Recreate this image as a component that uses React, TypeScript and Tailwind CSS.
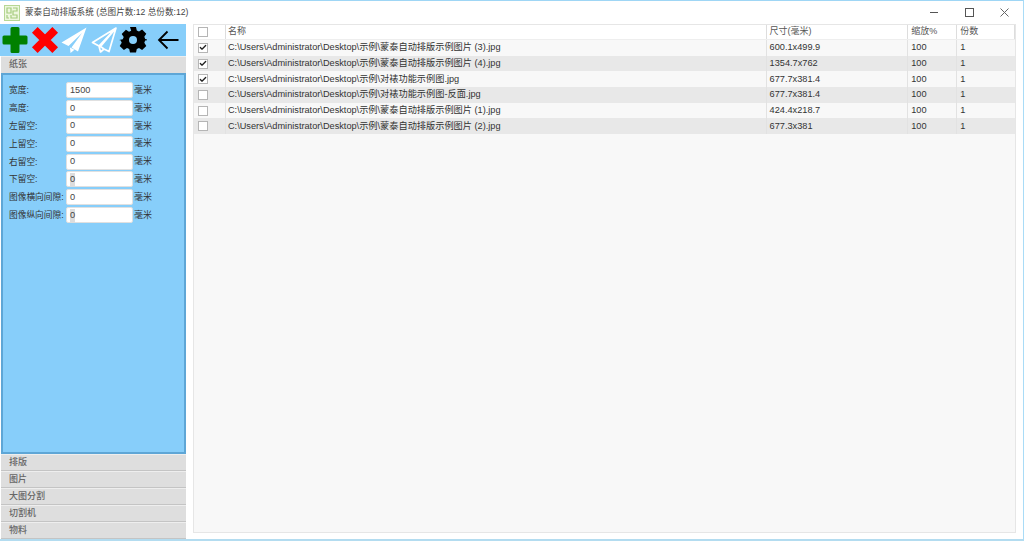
import { Check } from "lucide-react";

const font = { fontFamily: '"Liberation Sans", "Noto Sans CJK SC", sans-serif' };

const fields = [
  { label: "宽度:", value: "1500" },
  { label: "高度:", value: "0" },
  { label: "左留空:", value: "0" },
  { label: "上留空:", value: "0" },
  { label: "右留空:", value: "0" },
  { label: "下留空:", value: "0", selected: true },
  { label: "图像横向间隙:", value: "0" },
  { label: "图像纵向间隙:", value: "0", selected: true },
];

const rows = [
  { name: "C:\\Users\\Administrator\\Desktop\\示例\\蒙泰自动排版示例图片 (3).jpg", size: "600.1x499.9", checked: true },
  { name: "C:\\Users\\Administrator\\Desktop\\示例\\蒙泰自动排版示例图片 (4).jpg", size: "1354.7x762", checked: true },
  { name: "C:\\Users\\Administrator\\Desktop\\示例\\对裱功能示例图.jpg", size: "677.7x381.4", checked: true },
  { name: "C:\\Users\\Administrator\\Desktop\\示例\\对裱功能示例图-反面.jpg", size: "677.7x381.4", checked: false },
  { name: "C:\\Users\\Administrator\\Desktop\\示例\\蒙泰自动排版示例图片 (1).jpg", size: "424.4x218.7", checked: false },
  { name: "C:\\Users\\Administrator\\Desktop\\示例\\蒙泰自动排版示例图片 (2).jpg", size: "677.3x381", checked: false },
];

const sections = ["排版", "图片", "大图分割", "切割机", "物料"];

function Box({ checked }: { checked: boolean }) {
  return (
    <div className="w-[10px] h-[10px] bg-white border border-[#b5b5b5] flex items-center justify-center">
      {checked && <Check size={9} strokeWidth={4} color="#222" />}
    </div>
  );
}

function SectionHead({ label }: { label: string }) {
  return (
    <div className="h-[17px] ml-[1px] bg-[#dedede] border-b border-[#c4c4c4] border-t border-t-[#eeeeee] pl-[8px] flex items-center text-[9px] font-medium text-[#666]">
      {label}
    </div>
  );
}

function Toolbar() {
  return (
    <div className="h-[32px] pl-[1px] flex items-center gap-[1.500px] bg-[#87cefa]">
      {/* add */}
      <svg width="28" height="28" viewBox="0 0 28 28" className="shrink-0">
        <path d="M11 1h6a1.500 1.500 0 0 1 1.500 1.500V9.500h6.500a1.500 1.500 0 0 1 1.500 1.500v6a1.500 1.500 0 0 1-1.500 1.500h-6.500V25.500A1.500 1.500 0 0 1 17 27h-6a1.500 1.500 0 0 1-1.500-1.500V18.500H3A1.500 1.500 0 0 1 1.500 17v-6A1.500 1.500 0 0 1 3 9.500h6.500V2.500A1.500 1.500 0 0 1 11 1z" fill="#008000" />
      </svg>
      {/* delete */}
      <svg width="28" height="28" viewBox="0 0 28 28" className="shrink-0">
        <path d="M3.800 3.800 L24.200 24.200 M24.200 3.800 L3.800 24.200" stroke="#ff0000" strokeWidth="8" strokeLinecap="butt" />
      </svg>
      {/* send, filled */}
      <svg width="28" height="28" viewBox="0 0 28 28" className="shrink-0">
        <path d="M26.500 1.500 L1.500 16.500 L8.500 20 L22 7 L11.500 21.500 L18 25.500 Z M10 21.500 L10.500 27 L14.500 23.800 Z" fill="#ffffff" />
      </svg>
      {/* send, outline */}
      <svg width="28" height="28" viewBox="0 0 28 28" className="shrink-0">
        <path d="M26 2 L2.500 16.500 L9 20 L10.500 26 L14 23 L19 25.500 Z M9 20 L26 2 M14 23 L10.500 20.500 L26 2" fill="none" stroke="#ffffff" strokeWidth="1.700" strokeLinejoin="round" />
      </svg>
      {/* settings */}
      <svg width="28" height="28" viewBox="0 0 28 28" className="shrink-0">
        <path
          d="M11 1h6l.8 3.600 2.200.9 3.100-2 4.200 4.200-2 3.100.9 2.200 3.600.8-3.600.8-.9 2.200 2 3.100-4.200 4.200-3.100-2-2.200.9-.8 3.600h-6l-.8-3.600-2.200-.9-3.100 2-4.200-4.200 2-3.100-.9-2.200L.2 14l3.600-.8.9-2.200-2-3.100 4.200-4.200 3.100 2 2.200-.9z"
          fill="#000"
        />
        <circle cx="14" cy="14" r="4" fill="#87cefa" />
      </svg>
      {/* back */}
      <svg width="28" height="28" viewBox="0 0 28 28" className="shrink-0 ml-[5.500px]">
        <path d="M24.500 14H5 M13.500 5.500 L5 14 L13.500 22.500" fill="none" stroke="#000" strokeWidth="1.800" />
      </svg>
    </div>
  );
}

export default function App() {
  return (
    <div className="w-[1024px] h-[541px] bg-white overflow-hidden flex flex-col border-t border-t-[#9fd6f5] border-r border-r-[#a9dcf7] border-b-[2px] border-b-[#b3dcf0] text-[9px] text-[#333]" style={font}>
      {/* Title bar */}
      <div className="h-[23px] shrink-0 flex items-center">
        <svg width="16" height="16" viewBox="0 0 16 16" className="ml-[4px] shrink-0">
          <rect x="0.500" y="0.500" width="15" height="15" fill="#eef7df" stroke="#b7d794" />
          <path d="M3 3h4v5H3zM9 3h4v3H9v4h4v3H7v-3M3 10v3h2" fill="none" stroke="#a5cc7e" strokeWidth="1.200" />
        </svg>
        <span className="ml-[5px] text-[8.600px] text-[#444]">蒙泰自动排版系统 (总图片数:12 总份数:12)</span>
        <div className="ml-auto mr-[1px] flex items-center">
          <div className="w-[35px] flex justify-center">
            <svg width="9" height="9" viewBox="0 0 9 9"><path d="M0 4.500h8" stroke="#555" /></svg>
          </div>
          <div className="w-[35px] flex justify-center">
            <svg width="9" height="9" viewBox="0 0 9 9"><rect x="0.500" y="0.500" width="8" height="8" fill="none" stroke="#555" /></svg>
          </div>
          <div className="w-[35px] flex justify-center">
            <svg width="9" height="9" viewBox="0 0 9 9"><path d="M.5.500l8 8M8.500.500l-8 8" stroke="#666" /></svg>
          </div>
        </div>
      </div>

      <div className="flex-1 flex min-h-0">
        {/* Left side */}
        <div className="w-[186px] shrink-0 flex flex-col">
          <Toolbar />
          <div className="h-[17px] ml-[1px] bg-[#dedede] border-t border-[#eeeeee] pl-[8px] flex items-center text-[9px] font-medium text-[#666]">纸张</div>
          <div className="flex-1 ml-[1px] bg-[#87cefa] border-[2px] border-[#5ea6d6] pt-[7px] pl-[6px] flex flex-col gap-[1.900px]">
            {fields.map((f) => (
              <div key={f.label} className="h-[16px] flex items-center">
                <span className="w-[57px] pt-[1px] shrink-0 whitespace-nowrap text-[8.700px] text-[#333]">{f.label}</span>
                <div className="w-[67px] h-[16px] bg-white rounded-[2px] border border-[#e0e0e0] pl-[3px] flex items-center text-[9.200px] text-[#444]">
                  <span className={`mt-[1px] ${f.selected ? "bg-[#dddddd]" : ""}`}>{f.value}</span>
                </div>
                <span className="ml-[1px] pt-[1px] text-[#333]">毫米</span>
              </div>
            ))}
          </div>
          {sections.map((s) => (
            <SectionHead key={s} label={s} />
          ))}
        </div>

        {/* Table */}
        <div className="flex-1 min-w-0 pl-[7px] pr-[7px] pb-[6px]">
          <div className="h-full bg-[#f8f8f8] border border-[#e6e6e6]">
            <div className="h-[15px] flex items-center bg-white border-b border-[#eeeeee] text-[#555]">
              <div className="w-[32px] pl-[4px] h-full flex items-center border-r border-[#dddddd]"><Box checked={false} /></div>
              <div className="w-[542px] pl-[2px] h-full flex items-center border-r border-[#dddddd]">名称</div>
              <div className="w-[142px] pl-[3px] h-full flex items-center border-r border-[#dddddd]">尺寸(毫米)</div>
              <div className="w-[49px] pl-[3px] h-full flex items-center border-r border-[#dddddd]">缩放%</div>
              <div className="w-[58px] pl-[3px] h-full flex items-center border-r border-[#dddddd]">份数</div>
            </div>
            {rows.map((r, i) => (
              <div key={r.name} className={`h-[15.700px] flex items-center text-[9.200px] text-[#333] ${i % 2 === 1 ? "bg-[#e8e8e8]" : "bg-[#f8f8f8]"}`}>
                <div className="w-[32px] pl-[4px] h-full flex items-center border-r border-[#e2e2e2]"><Box checked={r.checked} /></div>
                <div className="w-[542px] pl-[2px] pt-[0.500px] h-full flex items-center border-r border-[#e2e2e2] whitespace-nowrap">{r.name}</div>
                <div className="w-[142px] pl-[3px] pt-[0.500px] h-full flex items-center border-r border-[#e2e2e2]">{r.size}</div>
                <div className="w-[49px] pl-[3px] pt-[0.500px] h-full flex items-center border-r border-[#e2e2e2]">100</div>
                <div className="w-[58px] pl-[3px] pt-[0.500px] h-full flex items-center">1</div>
              </div>
            ))}
          </div>
        </div>
      </div>
    </div>
  );
}
